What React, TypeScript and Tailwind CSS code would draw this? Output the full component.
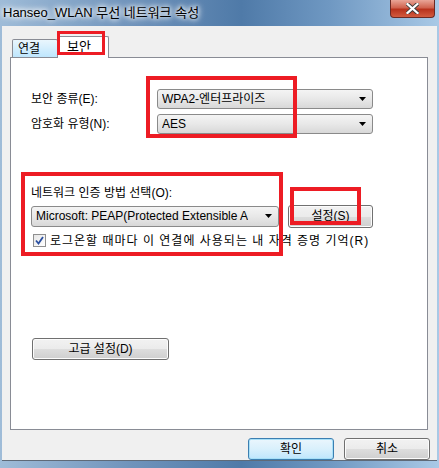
import React from "react";

const font = { fontFamily: '"Liberation Sans", "Noto Sans CJK KR", sans-serif' };

const Arrow = () => (
  <svg width="7" height="4" viewBox="0 0 7 4" className="shrink-0">
    <path d="M0 0h7L3.5 4z" fill="#000" />
  </svg>
);

const Select = ({ value, className }: { value: string; className: string }) => (
  <div
    className={`flex items-center justify-between pl-[4px] pr-[6px] border border-[#8a8a8a] rounded-[3px] bg-[linear-gradient(#f4f4f4,#e8e8e8_50%,#d8d8d8)] text-[12px] text-black ${className}`}
  >
    <span className="whitespace-nowrap overflow-hidden">{value}</span>
    <Arrow />
  </div>
);

const Button = ({ label, className, focus }: { label: string; className: string; focus?: boolean }) => (
  <div
    className={`flex items-center justify-center rounded-[3px] border text-[12px] text-black ${
      focus
        ? "border-[#3c7fb1] bg-[linear-gradient(#eaf6fd,#d9f0fc_50%,#bee6fd)] shadow-[inset_0_0_0_1px_#a8e0f8]"
        : "border-[#707070] bg-[linear-gradient(#f2f2f2,#ebebeb_50%,#dddddd_51%,#cfcfcf)] shadow-[inset_0_0_0_1px_#fcfcfc]"
    } ${className}`}
  >
    {label}
  </div>
);

export default function App() {
  return (
    <div
      style={font}
      className="relative w-[439px] h-[468px] overflow-hidden flex flex-col bg-[linear-gradient(90deg,#9fbcd8_0%,#6f93bb_30%,#4f7aa8_55%,#6f98c2_75%,#a9c9e6_100%)]"
    >
      {/* title bar */}
      <div className="h-[26px] shrink-0 flex items-start justify-between pl-[3px]">
        <div className="mt-[5px] text-[13px] leading-[16px] text-black [text-shadow:0_0_8px_#fff,0_0_6px_#fff,0_0_4px_#fff]">
          Hanseo_WLAN 무선 네트워크 속성
        </div>
        <div className="mr-[4px] w-[45px] h-[18px] rounded-b-[4px] border border-t-0 border-[#6b2a24] bg-[linear-gradient(#e9a597,#d0634f_45%,#b8321c_55%,#d25b3f)] flex items-center justify-center">
          <svg width="13" height="11" viewBox="0 0 13 11">
            <path d="M1.5 1 L11.5 10 M11.5 1 L1.5 10" stroke="#3a3a3a" strokeWidth="4" strokeLinecap="square" />
            <path d="M1.5 1 L11.5 10 M11.5 1 L1.5 10" stroke="#fff" strokeWidth="2.2" strokeLinecap="square" />
          </svg>
        </div>
      </div>

      {/* client area */}
      <div className="mx-[2px] h-[435px] shrink-0 bg-[#f0f0f0] border-b border-[#5f6a78] flex flex-col">
        {/* tabs */}
        <div className="flex items-end h-[26px] mt-[5px] pl-[10px]">
          <div className="w-[46px] h-[18px] border border-b-0 border-[#898c95] rounded-t-[2px] bg-[linear-gradient(#eaf6fd,#bee6fd)] text-[12px] leading-[18px] pl-[5px] -mr-px">
            연결
          </div>
          <div className="relative w-[52px] h-[22px] border border-b-0 border-[#898c95] rounded-t-[2px] bg-white text-[13px] leading-[20px] pl-[9px] -mb-px">
            보안
          </div>
        </div>

        {/* panel */}
        <div className="ml-[8px] w-[418px] h-[374px] bg-white border border-[#898c95] flex flex-col pl-[20px] pt-[31px]">
          <div className="flex items-center h-[20px] text-[12px]">
            <span className="w-[126px]">보안 종류(E):</span>
            <Select value="WPA2-엔터프라이즈" className="w-[216px] h-[20px]" />
          </div>
          <div className="flex items-center h-[20px] mt-[5px] text-[12px]">
            <span className="w-[126px]">암호화 유형(N):</span>
            <Select value="AES" className="w-[216px] h-[20px]" />
          </div>

          <div className="mt-[52px] text-[12px] leading-[14px]">네트워크 인증 방법 선택(O):</div>
          <div className="flex items-center mt-[5px] gap-[9px]">
            <Select value="Microsoft: PEAP(Protected Extensible A" className="w-[248px] h-[21px]" />
            <Button label="설정(S)" className="w-[85px] h-[23px]" />
          </div>
          <div className="flex items-center mt-[4px] ml-[2px] text-[12px]">
            <div className="w-[13px] h-[13px] border border-[#8f8f8f] bg-[linear-gradient(135deg,#e6e6e6,#fff)] flex items-center justify-center">
              <svg width="9" height="9" viewBox="0 0 9 9">
                <path d="M1 4.5 L3.5 7.5 L8 1" fill="none" stroke="#2a4fa0" strokeWidth="1.8" />
              </svg>
            </div>
            <span className="ml-[4px] whitespace-nowrap tracking-[1px]">로그온할 때마다 이 연결에 사용되는 내 자격 증명 기억(R)</span>
          </div>

          <Button label="고급 설정(D)" className="mt-[88px] ml-[1px] w-[137px] h-[22px]" />
        </div>

        {/* bottom buttons */}
        <div className="flex justify-end gap-[10px] mt-[8px] pr-[7px]">
          <Button label="확인" className="w-[86px] h-[22px]" focus />
          <Button label="취소" className="w-[86px] h-[22px]" />
        </div>
      </div>

      {/* red annotation boxes */}
      <div className="absolute z-20 left-[57px] top-[31px] w-[48px] h-[24px] border-[3px] border-[#ed1c24]" />
      <div className="absolute z-20 left-[146px] top-[76px] w-[151px] h-[62px] border-[4px] border-[#ed1c24]" />
      <div className="absolute z-20 left-[21px] top-[172px] w-[262px] h-[84px] border-[4px] border-[#ed1c24]" />
      <div className="absolute z-20 left-[290px] top-[187px] w-[71px] h-[38px] border-[4px] border-[#ed1c24]" />
    </div>
  );
}
